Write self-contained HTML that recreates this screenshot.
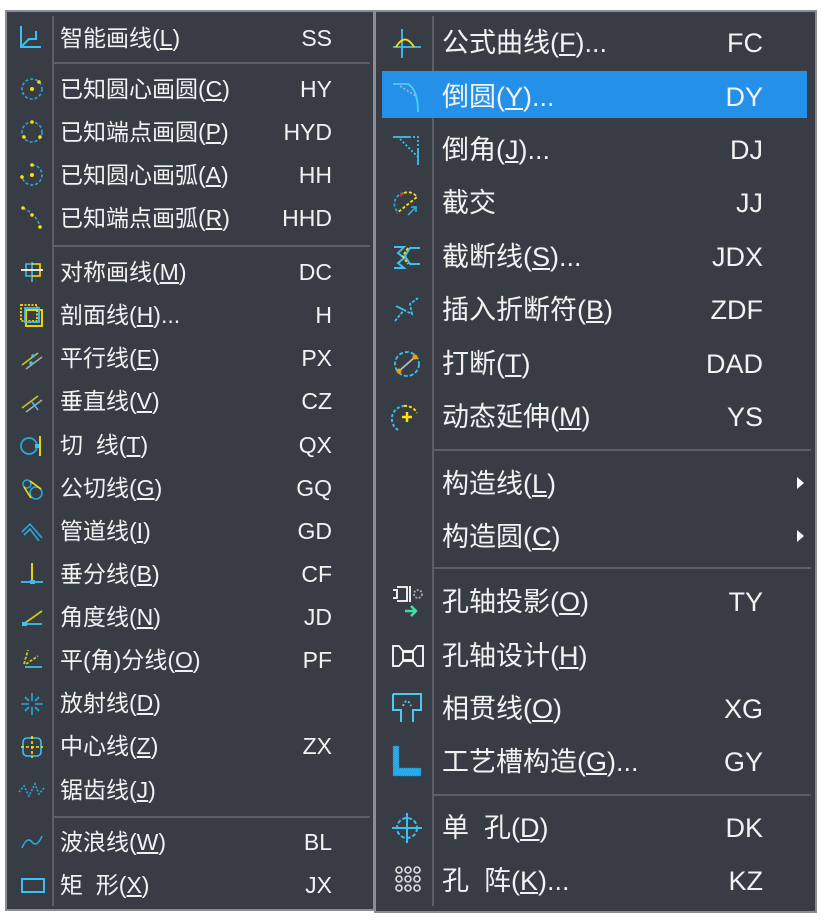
<!DOCTYPE html>
<html><head><meta charset="utf-8"><style>
html,body{margin:0;padding:0;background:#fff;width:823px;height:920px;overflow:hidden}
.p{position:absolute;background:#373c45;border:2px solid #8a8d92;box-sizing:border-box}
.t{position:absolute;color:#f2f2f2;font-family:"Liberation Sans","Noto Sans CJK SC",sans-serif;white-space:nowrap;line-height:1}
.l{font-size:23px;margin-top:-1px}
.r{font-size:27px;margin-top:-1px}
.k{text-align:right}
.sep{position:absolute;height:2px;background:#5a5f66}
.vs{position:absolute;width:2px;background:#5a5f66}
u{text-decoration:underline;text-underline-offset:2px}
svg{position:absolute;overflow:visible}
</style></head><body>
<div class="p" style="left:5px;top:10px;width:370px;height:901px"></div>
<div class="p" style="left:374px;top:10px;width:443px;height:903px"></div>
<div class="vs" style="left:52px;top:16px;height:890px"></div>
<div class="vs" style="left:432px;top:16px;height:890px"></div>
<div class="sep" style="left:53px;top:62px;width:317px"></div>
<div class="sep" style="left:53px;top:245px;width:317px"></div>
<div class="sep" style="left:53px;top:816px;width:317px"></div>
<div class="sep" style="left:433px;top:449px;width:378px"></div>
<div class="sep" style="left:433px;top:567px;width:378px"></div>
<div class="sep" style="left:433px;top:794px;width:378px"></div>
<div style="position:absolute;left:382px;top:71px;width:425px;height:47px;background:#2490e8"></div>

<!-- left texts -->
<div class="t l" style="left:60px;top:28px">智能画线(<u>L</u>)</div><div class="t l k" style="right:491px;top:28px">SS</div>
<div class="t l" style="left:60px;top:79px">已知圆心画圆(<u>C</u>)</div><div class="t l k" style="right:491px;top:79px">HY</div>
<div class="t l" style="left:60px;top:122px">已知端点画圆(<u>P</u>)</div><div class="t l k" style="right:491px;top:122px">HYD</div>
<div class="t l" style="left:60px;top:165px">已知圆心画弧(<u>A</u>)</div><div class="t l k" style="right:491px;top:165px">HH</div>
<div class="t l" style="left:60px;top:208px">已知端点画弧(<u>R</u>)</div><div class="t l k" style="right:491px;top:208px">HHD</div>
<div class="t l" style="left:60px;top:262px">对称画线(<u>M</u>)</div><div class="t l k" style="right:491px;top:262px">DC</div>
<div class="t l" style="left:60px;top:305px">剖面线(<u>H</u>)...</div><div class="t l k" style="right:491px;top:305px">H</div>
<div class="t l" style="left:60px;top:348px">平行线(<u>E</u>)</div><div class="t l k" style="right:491px;top:348px">PX</div>
<div class="t l" style="left:60px;top:391px">垂直线(<u>V</u>)</div><div class="t l k" style="right:491px;top:391px">CZ</div>
<div class="t l" style="left:60px;top:435px">切&nbsp;&nbsp;线(<u>T</u>)</div><div class="t l k" style="right:491px;top:435px">QX</div>
<div class="t l" style="left:60px;top:478px">公切线(<u>G</u>)</div><div class="t l k" style="right:491px;top:478px">GQ</div>
<div class="t l" style="left:60px;top:521px">管道线(<u>I</u>)</div><div class="t l k" style="right:491px;top:521px">GD</div>
<div class="t l" style="left:60px;top:564px">垂分线(<u>B</u>)</div><div class="t l k" style="right:491px;top:564px">CF</div>
<div class="t l" style="left:60px;top:607px">角度线(<u>N</u>)</div><div class="t l k" style="right:491px;top:607px">JD</div>
<div class="t l" style="left:60px;top:650px">平(角)分线(<u>O</u>)</div><div class="t l k" style="right:491px;top:650px">PF</div>
<div class="t l" style="left:60px;top:693px">放射线(<u>D</u>)</div>
<div class="t l" style="left:60px;top:736px">中心线(<u>Z</u>)</div><div class="t l k" style="right:491px;top:736px">ZX</div>
<div class="t l" style="left:60px;top:780px">锯齿线(<u>J</u>)</div>
<div class="t l" style="left:60px;top:832px">波浪线(<u>W</u>)</div><div class="t l k" style="right:491px;top:832px">BL</div>
<div class="t l" style="left:60px;top:875px">矩&nbsp;&nbsp;形(<u>X</u>)</div><div class="t l k" style="right:491px;top:875px">JX</div>

<!-- right texts -->
<div class="t r" style="left:442px;top:31px">公式曲线(<u>F</u>)...</div><div class="t r k" style="right:60px;top:31px">FC</div>
<div class="t r" style="left:442px;top:85px">倒圆(<u>Y</u>)...</div><div class="t r k" style="right:60px;top:85px">DY</div>
<div class="t r" style="left:442px;top:138px">倒角(<u>J</u>)...</div><div class="t r k" style="right:60px;top:138px">DJ</div>
<div class="t r" style="left:442px;top:191px">截交</div><div class="t r k" style="right:60px;top:191px">JJ</div>
<div class="t r" style="left:442px;top:245px">截断线(<u>S</u>)...</div><div class="t r k" style="right:60px;top:245px">JDX</div>
<div class="t r" style="left:442px;top:298px">插入折断符(<u>B</u>)</div><div class="t r k" style="right:60px;top:298px">ZDF</div>
<div class="t r" style="left:442px;top:352px">打断(<u>T</u>)</div><div class="t r k" style="right:60px;top:352px">DAD</div>
<div class="t r" style="left:442px;top:405px">动态延伸(<u>M</u>)</div><div class="t r k" style="right:60px;top:405px">YS</div>
<div class="t r" style="left:442px;top:472px">构造线(<u>L</u>)</div>
<div class="t r" style="left:442px;top:525px">构造圆(<u>C</u>)</div>
<div class="t r" style="left:442px;top:590px">孔轴投影(<u>O</u>)</div><div class="t r k" style="right:60px;top:590px">TY</div>
<div class="t r" style="left:442px;top:644px">孔轴设计(<u>H</u>)</div>
<div class="t r" style="left:442px;top:697px">相贯线(<u>O</u>)</div><div class="t r k" style="right:60px;top:697px">XG</div>
<div class="t r" style="left:442px;top:750px">工艺槽构造(<u>G</u>)...</div><div class="t r k" style="right:60px;top:750px">GY</div>
<div class="t r" style="left:442px;top:816px">单&nbsp;&nbsp;孔(<u>D</u>)</div><div class="t r k" style="right:60px;top:816px">DK</div>
<div class="t r" style="left:442px;top:869px">孔&nbsp;&nbsp;阵(<u>K</u>)...</div><div class="t r k" style="right:60px;top:869px">KZ</div>
<svg style="left:796px;top:476px" width="10" height="14"><path d="M1 1L8 7L1 13Z" fill="#fff"/></svg>
<svg style="left:796px;top:529px" width="10" height="14"><path d="M1 1L8 7L1 13Z" fill="#fff"/></svg>

<!-- left icons -->
<svg style="left:18px;top:25px" width="26" height="26" fill="none" stroke="#3cc0f0" stroke-width="2"><path d="M3 1V22H23M3 22L11 14H18V6" /></svg>
<svg style="left:20px;top:77px" width="24" height="24" fill="none"><circle cx="12" cy="12" r="10" stroke="#2aa8d8" stroke-width="1.6" stroke-dasharray="3 2"/><circle cx="12" cy="12" r="2" fill="#ffe000"/><circle cx="19" cy="5" r="1.8" fill="#ffe000"/></svg>
<svg style="left:20px;top:120px" width="24" height="24" fill="none"><circle cx="12" cy="12" r="10" stroke="#2aa8d8" stroke-width="1.6" stroke-dasharray="3 2"/><circle cx="12" cy="2" r="1.8" fill="#ffe000"/><circle cx="4" cy="17" r="1.8" fill="#ffe000"/><circle cx="20" cy="17" r="1.8" fill="#ffe000"/></svg>
<svg style="left:20px;top:163px" width="24" height="24" fill="none"><path d="M12 2A10 10 0 1 1 2 12" stroke="#2aa8d8" stroke-width="1.6" stroke-dasharray="3 2"/><circle cx="12" cy="12" r="2" fill="#ffe000"/><circle cx="12" cy="2" r="1.8" fill="#ffe000"/><circle cx="2" cy="14" r="1.8" fill="#ffe000"/></svg>
<svg style="left:20px;top:206px" width="24" height="24" fill="none"><path d="M3 2Q16 8 20 20" stroke="#2aa8d8" stroke-width="1.6" stroke-dasharray="3 2"/><circle cx="3" cy="2" r="1.8" fill="#ffe000"/><circle cx="12" cy="9" r="1.8" fill="#ffe000"/><circle cx="20" cy="21" r="1.8" fill="#ffe000"/></svg>
<svg style="left:20px;top:260px" width="24" height="24" fill="none" stroke-width="1.6"><path d="M12 2V22M6 4H12V16H6Z" stroke="#3cc0f0"/><path d="M12 4H20V16H12M1 10H23" stroke="#ffe000"/><path d="M1 10H23" stroke="#fff"/></svg>
<svg style="left:19px;top:303px" width="26" height="26" fill="none" stroke-width="1.8"><rect x="2" y="2" width="16" height="16" stroke="#ffe000" stroke-dasharray="2 1.5"/><rect x="7" y="7" width="16" height="16" stroke="#ffe000"/><rect x="6" y="5" width="14" height="14" stroke="#3cc0f0"/></svg>
<svg style="left:20px;top:347px" width="24" height="24" stroke-width="1.6"><path d="M2 18L18 6" stroke="#c8c818"/><path d="M6 22L22 10" stroke="#aaa"/><circle cx="13" cy="9" r="1.8" fill="#3cc0f0"/><circle cx="11" cy="16" r="1.8" fill="#3cc0f0"/></svg>
<svg style="left:20px;top:390px" width="24" height="24" stroke-width="1.6"><path d="M2 18L18 6" stroke="#c8c818"/><path d="M6 22L22 10" stroke="#aaa"/><path d="M12 12L18 20" stroke="#3cc0f0"/></svg>
<svg style="left:19px;top:434px" width="26" height="24" fill="none" stroke-width="1.8"><circle cx="10" cy="12" r="8" stroke="#2aa8d8"/><path d="M21 2V22" stroke="#ffe000"/><rect x="16" y="10" width="4" height="4" fill="#3cc0f0" stroke="none"/></svg>
<svg style="left:20px;top:477px" width="24" height="24" fill="none" stroke-width="1.6"><circle cx="7" cy="7" r="4" stroke="#2aa8d8"/><circle cx="16" cy="16" r="6" stroke="#2aa8d8"/><path d="M4 10L11 21M10 4L21 12" stroke="#ffe000"/></svg>
<svg style="left:20px;top:520px" width="24" height="24" fill="none" stroke="#2aa8d8" stroke-width="1.6"><path d="M2 12L10 4L22 18M4 15L10 9L19 21"/></svg>
<svg style="left:20px;top:562px" width="24" height="24" stroke-width="1.8"><path d="M12 1V18" stroke="#ffe000"/><path d="M1 20H23" stroke="#3cc0f0"/><rect x="10" y="18" width="5" height="4" fill="#3cc0f0"/></svg>
<svg style="left:20px;top:605px" width="24" height="24" stroke-width="1.8"><path d="M5 18L22 6" stroke="#c8c818"/><path d="M5 19H22" stroke="#3cc0f0"/><rect x="2" y="17" width="5" height="4" fill="#3cc0f0"/></svg>
<svg style="left:20px;top:648px" width="24" height="24" stroke-width="1.8" fill="none"><path d="M4 16L8 2M6 16L18 8" stroke="#c8c818" stroke-dasharray="3 1.5"/><path d="M5 19H22" stroke="#3cc0f0"/></svg>
<svg style="left:20px;top:692px" width="24" height="24" stroke="#2aa8d8" stroke-width="1.6"><path d="M12 1V9M12 15V23M1 12H9M15 12H23M5 5L9 9M15 15L19 19M19 5L15 9M9 15L5 19"/></svg>
<svg style="left:20px;top:735px" width="24" height="24" fill="none" stroke-width="1.6"><rect x="3" y="3" width="18" height="18" rx="4" stroke="#3cc0f0"/><path d="M12 1V23M1 12H23" stroke="#ffe000" stroke-dasharray="3 2"/></svg>
<svg style="left:18px;top:780px" width="28" height="20" fill="none" stroke="#2aa8d8" stroke-width="1.6" stroke-dasharray="2 1.5"><path d="M1 12L6 6L11 16L17 4L21 14L26 8"/></svg>
<svg style="left:20px;top:832px" width="24" height="20" fill="none" stroke="#2aa8d8" stroke-width="1.6"><path d="M2 16Q7 4 12 10T22 4"/></svg>
<svg style="left:20px;top:876px" width="26" height="20" fill="none" stroke="#3cc0f0" stroke-width="2"><rect x="2" y="3" width="22" height="13"/></svg>

<!-- right icons -->
<svg style="left:392px;top:28px" width="30" height="32" fill="none" stroke-width="1.8"><path d="M10 1V30M1 19H29" stroke="#3cc0f0"/><path d="M4 19Q13 4 22 19" stroke="#ffe000"/></svg>
<svg style="left:392px;top:82px" width="30" height="32" fill="none" stroke-width="1.8"><path d="M1 2H16Q26 8 26 30" stroke="#4bd0f4"/><path d="M8 4L24 14" stroke="#aad" stroke-dasharray="2 2"/></svg>
<svg style="left:392px;top:135px" width="30" height="32" fill="none" stroke-width="1.8"><path d="M1 2H17M26 14V30" stroke="#3cc0f0"/><path d="M17 2H26V14M8 4L26 22" stroke="#3cc0f0" stroke-dasharray="2 2"/></svg>
<svg style="left:392px;top:189px" width="30" height="30" fill="none" stroke-width="1.8"><path d="M5 22A11 11 0 0 1 12 4" stroke="#2aa8d8" stroke-dasharray="3 2"/><path d="M12 4A11 11 0 0 1 25 8L5 24" stroke="#ffe000" stroke-dasharray="3 2"/><path d="M8 7L12 4" stroke="#e03030"/><path d="M16 26L24 18M19 18H24V23" stroke="#2aa8d8"/></svg>
<svg style="left:392px;top:244px" width="30" height="28" fill="none" stroke-width="2"><path d="M2 3H12L6 9L12 14L6 19L12 24H2" stroke="#3cc0f0"/><path d="M16 4L11 12L16 20" stroke="#ffe000" stroke-dasharray="3 1.5"/><path d="M28 4H18L13 12L18 20H28" stroke="#3cc0f0"/></svg>
<svg style="left:392px;top:296px" width="30" height="30" fill="none" stroke="#3cc0f0" stroke-width="1.8" stroke-dasharray="3 1.5"><path d="M3 25L12 14L4 10L20 18L18 8L26 2"/></svg>
<svg style="left:392px;top:349px" width="30" height="30" fill="none" stroke-width="1.8"><circle cx="15" cy="15" r="12" stroke="#3cc0f0" stroke-dasharray="4 2"/><path d="M7 22L23 8" stroke="#bbb"/><circle cx="7" cy="22" r="2.5" fill="#f0a000"/><circle cx="23" cy="8" r="2.5" fill="#f0a000"/></svg>
<svg style="left:390px;top:400px" width="32" height="32" fill="none" stroke-width="2"><path d="M8 30A13 13 0 0 1 14 6" stroke="#3cc0f0" stroke-dasharray="3 2"/><path d="M14 6A13 13 0 0 1 27 13" stroke="#ffe000" stroke-dasharray="3 2"/><path d="M17 12V22M12 17H22" stroke="#ffe000" stroke-width="2.5"/></svg>
<svg style="left:391px;top:584px" width="34" height="34" fill="none" stroke-width="1.8"><path d="M2 6H6V14H2M6 3H16V17H6M19 2V18" stroke="#fff"/><circle cx="27" cy="10" r="4" stroke="#aaa" stroke-dasharray="2 1.5"/><path d="M14 27H24M20 22L25 27L20 32" stroke="#40e0a0" stroke-width="2.5"/></svg>
<svg style="left:391px;top:642px" width="34" height="28" fill="none" stroke="#fff" stroke-width="1.8"><path d="M2 4H8L12 9H22L26 4H32V24H26L22 19H12L8 24H2Z"/><rect x="12" y="10" width="10" height="8"/></svg>
<svg style="left:391px;top:692px" width="32" height="32" fill="none" stroke="#4bc8f4" stroke-width="2"><path d="M2 2H30V18H22V30M2 2V18H10V30"/><path d="M12 14Q16 4 20 14" stroke-dasharray="2 2"/></svg>
<svg style="left:391px;top:744px" width="32" height="34"><path d="M2 2H8V24H30V32H2Z" fill="#2aa8e8"/><path d="M2 2H8V24H30V32H2Z" fill="none" stroke="#1a7ab0" stroke-width="1" stroke-dasharray="1 1"/></svg>
<svg style="left:391px;top:812px" width="32" height="32" fill="none" stroke-width="2"><circle cx="16" cy="16" r="10" stroke="#3cc0f0" stroke-dasharray="4 2"/><path d="M16 1V31M1 16H31" stroke="#3cc0f0"/></svg>
<svg style="left:394px;top:865px" width="30" height="30" fill="none" stroke="#ddd" stroke-width="1.6"><circle cx="5" cy="5" r="3"/><circle cx="14" cy="5" r="3"/><circle cx="23" cy="5" r="3"/><circle cx="5" cy="14" r="3"/><circle cx="14" cy="14" r="3"/><circle cx="23" cy="14" r="3"/><circle cx="5" cy="23" r="3"/><circle cx="14" cy="23" r="3"/><circle cx="23" cy="23" r="3"/></svg>
</body></html>
